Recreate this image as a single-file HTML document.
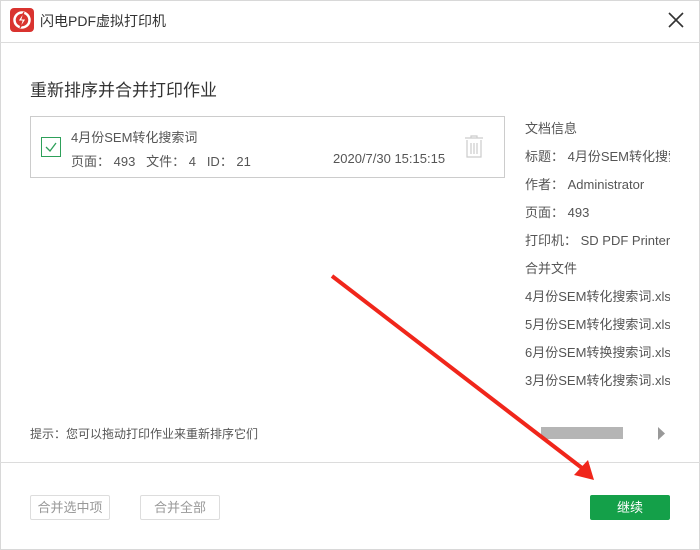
<!DOCTYPE html>
<html><head><meta charset="utf-8"><style>
*{margin:0;padding:0;box-sizing:border-box}
body{width:700px;height:550px;background:#fff;font-family:"Liberation Sans","Noto Sans CJK SC",sans-serif;color:#555;position:relative;overflow:hidden}
.abs{position:absolute;white-space:nowrap}
.win{position:absolute;left:0;top:0;width:700px;height:550px;border:1px solid #d8d8d8}
</style></head><body>
<div class="win"></div>
<div class="abs" style="left:10px;top:8px;width:24px;height:24px;background:#d9332f;border-radius:4px"></div>
<svg class="abs" style="left:10px;top:8px" width="24" height="24" viewBox="0 0 24 24"><circle cx="12" cy="12" r="7.5" fill="none" stroke="#fff" stroke-width="2.5"/><path d="M14 4 L8 13 L12 13 L10 20 L16 11 L12 11 Z" fill="#fff" stroke="#d9332f" stroke-width="1"/></svg>
<div class="abs" style="left:40px;top:11px;font-size:14px;color:#333">闪电PDF虚拟打印机</div>
<svg class="abs" style="left:668px;top:12px" width="16" height="16"><path d="M1 1L15 15M15 1L1 15" stroke="#333" stroke-width="1.6"/></svg>
<div class="abs" style="left:0;top:42px;width:700px;height:1px;background:#dcdcdc"></div>
<div class="abs" style="left:30px;top:76px;font-size:17px;color:#333">重新排序并合并打印作业</div>
<div class="abs" style="left:30px;top:116px;width:475px;height:62px;border:1px solid #ccc"></div>
<div class="abs" style="left:41px;top:137px;width:20px;height:20px;border:1px solid #2ea05a"></div>
<svg class="abs" style="left:41px;top:137px" width="20" height="20"><path d="M5 10L9 14L15 6" fill="none" stroke="#2ea05a" stroke-width="1.3"/></svg>
<div class="abs" style="left:71px;top:127px;font-size:13px;color:#555">4月份SEM转化搜索词</div>
<div class="abs" style="left:71px;top:151px;font-size:13px;color:#555">页面：&nbsp;493&nbsp;&nbsp;&nbsp;文件：&nbsp;4&nbsp;&nbsp;&nbsp;ID：&nbsp;21</div>
<div class="abs" style="left:333px;top:151px;font-size:13px;color:#555">2020/7/30 15:15:15</div>
<svg class="abs" style="left:463px;top:135px" width="22" height="24"><path d="M2 3H20M8 3V1H14V3M4 5V22H18V5M8 8V19M11 8V19M14 8V19" fill="none" stroke="#ccc" stroke-width="1.2"/></svg>
<div class="abs" style="left:525px;top:115px;font-size:13px;line-height:28px;color:#555;width:145px;overflow:hidden">
文档信息<br>标题：&nbsp;4月份SEM转化搜索<br>作者：&nbsp;Administrator<br>页面：&nbsp;493<br>打印机：&nbsp;SD PDF Printer<br>合并文件<br>4月份SEM转化搜索词.xlsx文<br>5月份SEM转化搜索词.xlsx文<br>6月份SEM转换搜索词.xlsx文<br>3月份SEM转化搜索词.xlsx文</div>
<div class="abs" style="left:30px;top:425px;font-size:12px;color:#555">提示：您可以拖动打印作业来重新排序它们</div>
<div class="abs" style="left:541px;top:427px;width:82px;height:12px;background:#b5b5b5"></div>
<svg class="abs" style="left:658px;top:427px" width="8" height="13"><path d="M0 0L7 6.5L0 13Z" fill="#999"/></svg>
<div class="abs" style="left:0;top:462px;width:700px;height:1px;background:#dcdcdc"></div>
<div class="abs" style="left:30px;top:495px;width:80px;height:25px;border:1px solid #ddd;border-radius:2px;font-size:13px;color:#999;text-align:center;line-height:23px">合并选中项</div>
<div class="abs" style="left:140px;top:495px;width:80px;height:25px;border:1px solid #ddd;border-radius:2px;font-size:13px;color:#999;text-align:center;line-height:23px">合并全部</div>
<div class="abs" style="left:590px;top:495px;width:80px;height:25px;background:#14a049;border-radius:2px;font-size:13px;color:#fff;text-align:center;line-height:25px">继续</div>
<svg class="abs" style="left:0;top:0" width="700" height="550"><line x1="332" y1="276" x2="582" y2="468" stroke="#f0261b" stroke-width="4"/><path d="M594 480L574 475L588 460Z" fill="#f0261b"/></svg>
</body></html>
